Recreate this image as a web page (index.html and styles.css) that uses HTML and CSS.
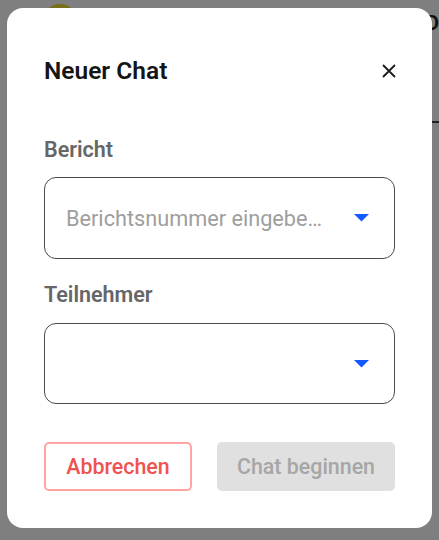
FILE: index.html
```html
<!DOCTYPE html>
<html lang="de">
<head>
<meta charset="utf-8">
<title>Neuer Chat</title>
<link rel="stylesheet" href="styles.css">
</head>
<body>
<div class="backdrop">
  <div class="bg-avatar"></div>
  <div class="bg-text">D</div>
  <div class="bg-line"></div>
</div>
<div class="dialog">
  <div class="dialog-head">
    <h2 class="title">Neuer Chat</h2>
    <button class="close" aria-label="Schließen">
      <svg width="14" height="14" viewBox="0 0 14 14"><path d="M1 1L13 13M13 1L1 13" stroke="#1a1a1a" stroke-width="1.8" fill="none"/></svg>
    </button>
  </div>
  <div class="field field-first">
    <div class="label">Bericht</div>
    <div class="select">
      <span class="placeholder">Berichtsnummer eingebe…</span>
      <svg class="caret" width="15" height="8" viewBox="0 0 15 8"><path d="M0 0H15L7.5 7.5Z" fill="#1259ff"/></svg>
    </div>
  </div>
  <div class="field">
    <div class="label">Teilnehmer</div>
    <div class="select">
      <span class="placeholder"></span>
      <svg class="caret" width="15" height="8" viewBox="0 0 15 8"><path d="M0 0H15L7.5 7.5Z" fill="#1259ff"/></svg>
    </div>
  </div>
  <div class="actions">
    <button class="btn btn-cancel">Abbrechen</button>
    <button class="btn btn-start" disabled>Chat beginnen</button>
  </div>
</div>
</body>
</html>
```
FILE: styles.css
```css
* { box-sizing: border-box; }
html, body { margin: 0; padding: 0; }
body {
  width: 439px;
  height: 540px;
  overflow: hidden;
  background: #7f7f7f;
  font-family: Roboto, "Noto Sans", sans-serif;
  position: relative;
  padding: 8px 7px 0 7px;
}
.backdrop { position: absolute; inset: 0; }
.bg-avatar {
  position: absolute;
  left: 42px; top: 4px;
  width: 36px; height: 36px;
  border-radius: 50%;
  background: #787019;
}
.bg-text {
  position: absolute;
  left: 426px; top: 11px;
  font-size: 20px;
  line-height: 24px;
  font-weight: 700;
  color: #111;
}
.bg-line {
  position: absolute;
  left: 432px; top: 121px;
  width: 10px; height: 2px;
  background: #222;
}
.dialog {
  position: relative;
  width: 425px;
  height: 520px;
  background: #fff;
  border-radius: 16px;
  padding: 49px 36px 0 37px;
  display: flex;
  flex-direction: column;
}
.dialog-head {
  display: flex;
  align-items: center;
  justify-content: space-between;
  height: 28px;
}
.title {
  margin: 0;
  font-size: 24.5px;
  line-height: 28px;
  font-weight: 600;
  color: #151515;
}
.close {
  border: 0;
  background: none;
  padding: 0;
  width: 14px;
  height: 14px;
  display: flex;
}
.field { display: flex; flex-direction: column; margin-top: 24px; }
.field-first { margin-top: 53px; }
.label {
  font-size: 21.5px;
  line-height: 24px;
  font-weight: 600;
  color: #666;
  margin-bottom: 15px;
}
.field + .field .label { margin-bottom: 16px; }
.select {
  width: 351px;
  height: 82px;
  border: 1.5px solid #4a4a4a;
  border-radius: 12px;
  display: flex;
  align-items: center;
  justify-content: space-between;
  padding: 0 25px 0 21px;
}
.field + .field .select { height: 81px; }
.placeholder {
  font-size: 21.7px;
  color: #9e9e9e;
}
.caret { display: block; }
.actions {
  margin-top: 38px;
  width: 351px;
  display: flex;
  justify-content: space-between;
}
.btn {
  height: 49px;
  border-radius: 5px;
  font-family: Roboto, "Noto Sans", sans-serif;
  font-size: 21.4px;
  font-weight: 500;
  padding: 0;
}
.btn-cancel {
  width: 148px;
  background: #fff;
  border: 2px solid #ffa3a3;
  color: #f05252;
}
.btn-start {
  width: 178px;
  background: #e0e0e0;
  border: 0;
  color: #a6a6a6;
}
```
